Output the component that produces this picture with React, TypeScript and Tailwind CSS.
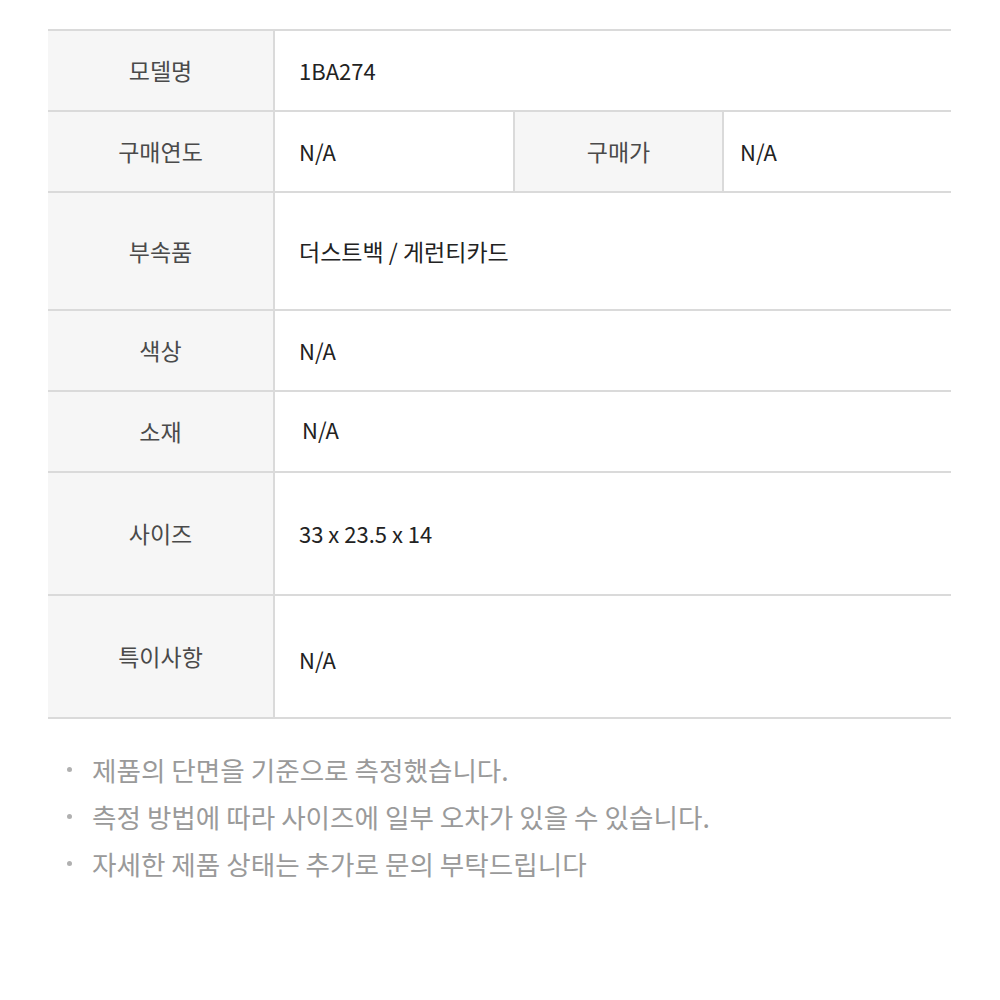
const font = "font-['Noto_Sans_CJK_KR','Noto_Sans',sans-serif]";

function Label({ children, className = "" }: { children: React.ReactNode; className?: string }) {
  return (
    <div className={`flex items-center justify-center bg-[#f6f6f6] text-[23px] text-[#4a4a4a] ${className}`}>
      {children}
    </div>
  );
}

function Value({ children, className = "" }: { children: React.ReactNode; className?: string }) {
  return <div className={`flex flex-1 items-center text-[#222] ${className}`}>{children}</div>;
}

const rows = [
  { label: "모델명", value: "1BA274", h: "h-[81px]" },
  { label: "부속품", value: "더스트백 / 게런티카드", h: "h-[118px]", size: "text-[23px]" },
  { label: "색상", value: "N/A", h: "h-[81px]" },
  { label: "소재", value: "N/A", h: "h-[81px]", shift: "pl-[27px] pb-[5px]" },
  { label: "사이즈", value: "33 x 23.5 x 14", h: "h-[123px]" },
  { label: "특이사항", value: "N/A", h: "h-[123px]", shift: "pl-[24px] pt-[6px]" },
];

const notes = [
  "제품의 단면을 기준으로 측정했습니다.",
  "측정 방법에 따라 사이즈에 일부 오차가 있을 수 있습니다.",
  "자세한 제품 상태는 추가로 문의 부탁드립니다",
];

export default function App() {
  const row = (r: (typeof rows)[number]) => (
    <div key={r.label} className={`flex border-b-2 border-[#dadada] ${r.h}`}>
      <Label className="w-[227px] border-r-2 border-[#dadada]">{r.label}</Label>
      <Value className={`${r.size ?? "text-[22px]"} ${r.shift ?? "pl-[24px]"}`}>{r.value}</Value>
    </div>
  );

  return (
    <div className={`min-h-[1000px] bg-white pt-[29px] ${font}`}>
      <div className="ml-[48px] w-[903px] border-t-2 border-[#dadada]">
        {row(rows[0])}
        <div className="flex h-[81px] border-b-2 border-[#dadada]">
          <Label className="w-[227px] border-r-2 border-[#dadada]">구매연도</Label>
          <Value className="w-[240px] flex-none border-r-2 border-[#dadada] pl-[24px] text-[22px]">N/A</Value>
          <Label className="w-[209px] border-r-2 border-[#dadada]">구매가</Label>
          <Value className="pl-[16px] text-[22px]">N/A</Value>
        </div>
        {rows.slice(1).map(row)}
      </div>

      <ul className="ml-[67px] mt-[27px] flex flex-col">
        {notes.map((n) => (
          <li key={n} className="flex items-center text-[26.6px] leading-[47px] text-[#9a9a9a]">
            <span className="mr-[20px] h-[5px] w-[5px] rounded-full bg-[#b0b0b0]" />
            {n}
          </li>
        ))}
      </ul>
    </div>
  );
}
